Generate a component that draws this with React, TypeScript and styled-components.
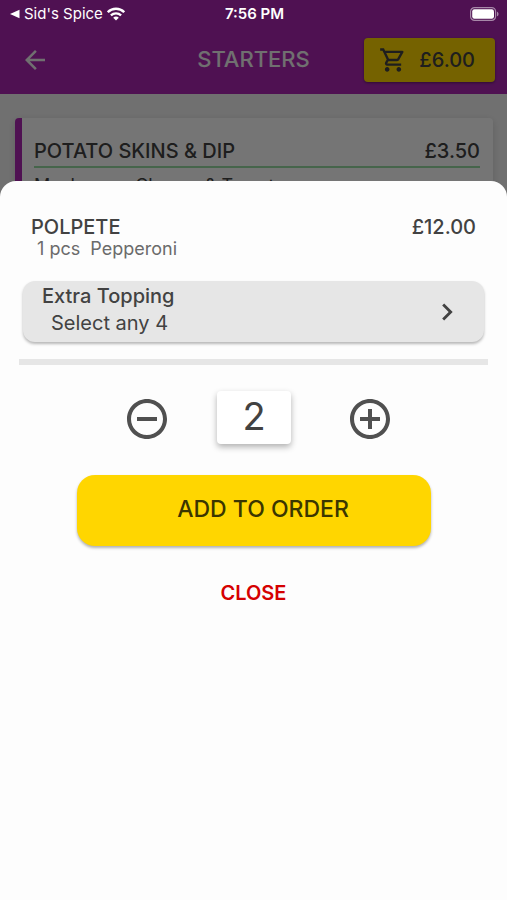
import React, { useState } from 'react';
import styled, { createGlobalStyle } from 'styled-components';
import {
  MdAddCircleOutline,
  MdArrowBack,
  MdChevronRight,
  MdOutlineShoppingCart,
  MdRemoveCircleOutline,
} from 'react-icons/md';

const GlobalStyle = createGlobalStyle`
  *, *::before, *::after { box-sizing: border-box; }
  body { margin: 0; background: #fdfdfd; }
  h1, h2, h3, p { margin: 0; font-weight: inherit; font-size: inherit; }
  button {
    border: 0;
    padding: 0;
    background: none;
    color: inherit;
    font: inherit;
    cursor: pointer;
  }
  svg { display: block; flex: none; }
`;

const Screen = styled.div`
  position: relative;
  min-height: 100vh;
  overflow: hidden;
  background: #f5f5f5;
  color: #424242;
  font-family: Inter, "Open Sans", sans-serif;
  font-weight: 500;
`;

const StatusBar = styled.div`
  position: absolute;
  inset: 0 0 auto;
  z-index: 2;
  display: grid;
  grid-template-columns: 1fr auto 1fr;
  align-items: center;
  height: 28px;
  padding: 0 8px 0 10px;
  color: #fff;
  font-size: 15px;
  line-height: 20px;
`;

const BackToApp = styled.button`
  display: flex;
  align-items: center;
  gap: 4px;
  font-weight: 400;
`;

const Clock = styled.time`
  font-weight: 600;
`;

const BatterySlot = styled.div`
  display: flex;
  justify-content: flex-end;
`;

const Header = styled.header`
  display: grid;
  grid-template-columns: 1fr auto 1fr;
  align-items: center;
  padding: 38px 12px 12px;
  background: #ac27b4;
  color: #f5f5f5;
`;

const BackButton = styled.button`
  justify-self: start;
  padding-left: 8px;
`;

const Title = styled.h1`
  padding-bottom: 2px;
  font-size: 22px;
  line-height: 28px;
`;

const CartButton = styled.button`
  justify-self: end;
  display: flex;
  align-items: center;
  gap: 12px;
  height: 44px;
  padding: 0 20px 0 15px;
  border-radius: 4px;
  background: #ffd600;
  font-size: 20px;
  color: #424242;
  box-shadow: 0 1px 3px rgba(0, 0, 0, 0.4);
`;

const MenuCard = styled.article`
  margin: 24px 14px 0 15px;
  padding: 21px 13px 12px 12px;
  border-left: 7px solid #ac27b4;
  border-radius: 4px;
  background: #fff;
  box-shadow: 0 2px 8px rgba(0, 0, 0, 0.15);
`;

const TitleRow = styled.div`
  display: flex;
  justify-content: space-between;
  font-size: 20px;
  line-height: 24px;
`;

const CardHeading = styled(TitleRow)`
  padding-bottom: 3px;
  border-bottom: 2px solid #98dca4;
`;

const CardText = styled.p`
  margin-top: 8px;
  font-size: 18px;
  font-weight: 400;
  line-height: 20px;
`;

const Scrim = styled.div`
  position: absolute;
  inset: 0;
  z-index: 1;
  display: flex;
  flex-direction: column;
  padding-top: 181px;
  background: rgba(0, 0, 0, 0.54);
`;

const Sheet = styled.section`
  flex: 1;
  display: flex;
  flex-direction: column;
  padding: 34px 19px 24px;
  border-radius: 16px 16px 0 0;
  background: #fdfdfd;
`;

const Item = styled.div`
  padding: 0 12px;
`;

const ItemDetail = styled.p`
  padding-left: 6px;
  color: #6b6b6b;
  font-size: 18px;
  font-weight: 400;
  line-height: 20px;
  white-space: pre;
`;

const OptionButton = styled.button`
  display: flex;
  align-items: center;
  justify-content: space-between;
  margin: 22px 4px 0;
  padding: 2px 20px 5px 19px;
  border-radius: 12px;
  background: #e6e6e6;
  box-shadow: 0 2px 3px rgba(0, 0, 0, 0.28);
  font-size: 20px;
  line-height: 27px;
  text-align: left;

  svg { margin-top: 4px; }
`;

const OptionLabel = styled.span`
  display: block;
`;

const OptionHint = styled(OptionLabel)`
  padding-left: 9px;
  font-weight: 400;
`;

const Divider = styled.hr`
  width: 100%;
  height: 6px;
  margin: 17px 0 0;
  border: 0;
  background: #e6e6e6;
`;

const Stepper = styled.div`
  display: flex;
  align-items: center;
  justify-content: center;
  margin-top: 26px;
  padding-left: 10px;
`;

const StepButton = styled.button`
  padding-top: 2px;
  color: #505050;
`;

const Quantity = styled.output`
  width: 74px;
  height: 53px;
  margin: 0 55px 0 46px;
  border-radius: 4px;
  background: #fff;
  box-shadow: 0 3px 6px rgba(0, 0, 0, 0.3);
  font-size: 38px;
  font-weight: 400;
  line-height: 50px;
  text-align: center;
`;

const AddButton = styled.button`
  margin: 31px 57px 0 58px;
  padding: 20px 0 23px 18px;
  border-radius: 18px;
  background: #ffd600;
  box-shadow: 0 2px 3px rgba(0, 0, 0, 0.3);
  color: #3b3600;
  font-size: 23px;
  line-height: 28px;
`;

const CloseButton = styled.button`
  align-self: center;
  margin-top: 35px;
  color: #d50000;
  font-size: 20px;
  font-weight: 600;
  line-height: 24px;
`;

const BackTriangle = () => (
  <svg width="10" height="10" viewBox="0 0 10 10" aria-hidden="true">
    <path d="M0 5 9.500.7v8.600z" fill="currentColor" />
  </svg>
);

const WifiIcon = () => (
  <svg width="18" height="14" viewBox="0 0 18 14" fill="none" stroke="currentColor" strokeWidth="2.300" aria-hidden="true">
    <path d="M.8 5.200C5.400.6 12.600.6 17.200 5.200" />
    <path d="M3.900 8.400c2.900-2.800 7.300-2.800 10.200 0" />
    <path d="M9 13.500 6.200 10.700c1.600-1.500 4-1.500 5.600 0z" fill="currentColor" stroke="none" />
  </svg>
);

const BatteryIcon = () => (
  <svg width="29" height="14" viewBox="0 0 29 14" aria-hidden="true">
    <rect x=".6" y=".6" width="25" height="12.800" rx="4" fill="none" stroke="#fff" strokeOpacity=".5" strokeWidth="1.200" />
    <rect x="2.200" y="2.200" width="21.800" height="9.600" rx="2.200" fill="#fff" />
    <path d="M27 4.700c2 .6 2 4 0 4.600z" fill="#fff" fillOpacity=".5" />
  </svg>
);

export default function App() {
  const [quantity, setQuantity] = useState(2);

  return (
    <>
      <GlobalStyle />
      <Screen>
        <StatusBar>
          <BackToApp type="button">
            <BackTriangle />
            Sid's Spice
            <WifiIcon />
          </BackToApp>
          <Clock>7:56 PM</Clock>
          <BatterySlot>
            <BatteryIcon />
          </BatterySlot>
        </StatusBar>

        <Header>
          <BackButton type="button" aria-label="Back">
            <MdArrowBack size={30} />
          </BackButton>
          <Title>STARTERS</Title>
          <CartButton type="button">
            <MdOutlineShoppingCart size={28} />
            £6.00
          </CartButton>
        </Header>

        <MenuCard>
          <CardHeading>
            <h2>POTATO SKINS &amp; DIP</h2>
            <span>£3.50</span>
          </CardHeading>
          <CardText>Mushroom, Cheese &amp; Tomato</CardText>
        </MenuCard>

        <Scrim>
          <Sheet role="dialog" aria-label="Polpete">
            <Item>
              <TitleRow>
                <h2>POLPETE</h2>
                <span>£12.00</span>
              </TitleRow>
              <ItemDetail>{'1 pcs  Pepperoni'}</ItemDetail>
            </Item>

            <OptionButton type="button">
              <span>
                <OptionLabel>Extra Topping</OptionLabel>
                <OptionHint>Select any 4</OptionHint>
              </span>
              <MdChevronRight size={34} />
            </OptionButton>
            <Divider />

            <Stepper>
              <StepButton type="button" aria-label="Decrease quantity" onClick={() => setQuantity(Math.max(1, quantity - 1))}>
                <MdRemoveCircleOutline size={48} />
              </StepButton>
              <Quantity>{quantity}</Quantity>
              <StepButton type="button" aria-label="Increase quantity" onClick={() => setQuantity(quantity + 1)}>
                <MdAddCircleOutline size={48} />
              </StepButton>
            </Stepper>

            <AddButton type="button">ADD TO ORDER</AddButton>
            <CloseButton type="button">CLOSE</CloseButton>
          </Sheet>
        </Scrim>
      </Screen>
    </>
  );
}
